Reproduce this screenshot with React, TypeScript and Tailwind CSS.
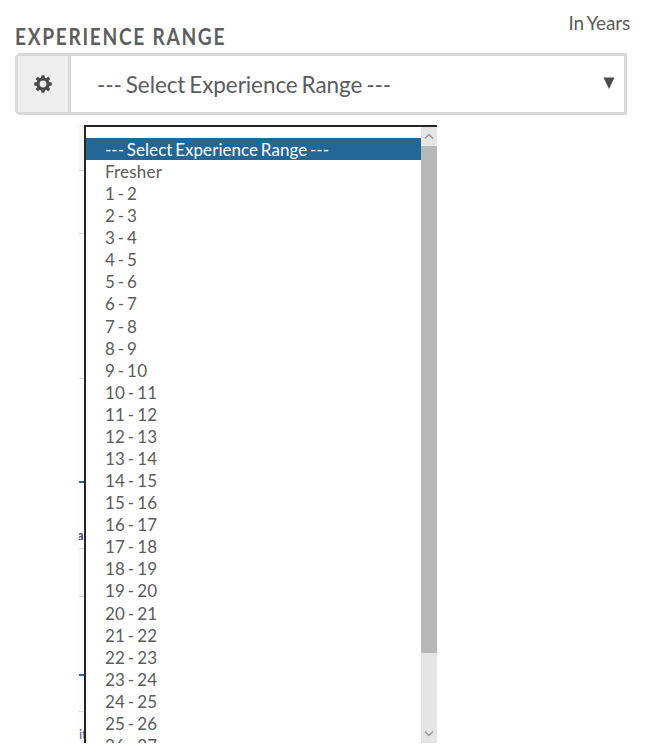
const ranges = Array.from({ length: 26 }, (_, i) => `${i + 1} - ${i + 2}`);

function Gear() {
  return (
    <svg width="18" height="18" viewBox="-9 -9 18 18" className="text-[#4a4a4a]">
      <circle r="5" fill="none" stroke="currentColor" strokeWidth="3.2" />
      {[0, 45, 90, 135, 180, 225, 270, 315].map((a) => (
        <path key={a} d="M-2 -5.6 L-1.4 -8.8 H1.4 L2 -5.6 Z" fill="currentColor" transform={`rotate(${a})`} />
      ))}
    </svg>
  );
}

/* Slice of the page that stays visible beside the open list */
function PageEdge() {
  return (
    <div className="relative h-full w-[5px] shrink-0 overflow-hidden bg-[#fdfdfd] text-[13px] leading-none">
      <div className="absolute top-0 h-[46px] w-full border-b border-[#d5d5d5] bg-[#f4f4f4]" />
      <div className="absolute top-[108px] h-px w-full bg-[#dedede]" />
      <div className="absolute top-[253px] h-px w-full bg-[#dedede]" />
      <div className="absolute top-[356px] h-[2px] w-full bg-[#2460a4]" />
      <div className="absolute -left-[2px] top-[404px] font-bold text-[#4a4c70]">a</div>
      <div className="absolute top-[423px] h-[49px] w-full border-y border-[#d8d8d8] bg-[#f7f7f7]" />
      <div className="absolute top-[549px] h-[2px] w-full bg-[#2467ad]" />
      <div className="absolute top-[586px] h-px w-full bg-[#dedede]" />
      <div className="absolute left-0 top-[603px] text-[#4a5585]">it</div>
    </div>
  );
}

export default function App() {
  return (
    <div className="h-[753px] w-[663px] overflow-hidden bg-white pl-[15px] font-['Lato',sans-serif] text-[#5c5c5c]">
      <div className="flex h-[53px] w-[615px] justify-between">
        <h1 className="mt-[23px] origin-left scale-x-[0.87] whitespace-nowrap text-[22px] font-bold leading-[28px] tracking-[1.95px] text-[#5e5e5e]">
          EXPERIENCE RANGE
        </h1>
        <span className="mt-[11px] whitespace-nowrap text-[19px] leading-[24px] tracking-[-0.15px] [word-spacing:-1.5px]">
          In Years
        </span>
      </div>

      <div className="flex h-[62px] w-[612px] rounded-l-[5px] border-[3px] border-[#dadada]">
        <div className="flex w-[53px] items-center justify-center border-r-[3px] border-[#dadada] bg-[#eee]">
          <Gear />
        </div>
        <div className="flex flex-1 items-center justify-between pl-[26px] pr-[9px]">
          <span className="whitespace-nowrap pt-[2px] text-[22.5px] leading-[30px] tracking-[-0.07px] [word-spacing:-1.8px]">
            --- Select Experience Range ---
          </span>
          <svg width="12" height="12" viewBox="0 0 12 12" className="mb-[3px]">
            <path d="M0.5 0.5H11.5L6 12Z" fill="#4a4a4a" />
          </svg>
        </div>
      </div>

      <div className="ml-[64px] mt-[10px] flex h-[618px] w-[358px] overflow-hidden">
        <PageEdge />
        <div className="flex min-w-0 flex-1 border-l-2 border-t-2 border-[#252525]">
          <ul className="min-w-0 flex-1 overflow-hidden pt-[11px] text-[17px]">
            <li className="h-[22px] whitespace-nowrap bg-[#236796] pl-[19px] pt-px leading-[22px] tracking-[0.05px] text-white [word-spacing:-1.7px]">
              --- Select Experience Range ---
            </li>
            {["Fresher", ...ranges].map((label) => (
              <li
                key={label}
                className="h-[22.08px] whitespace-nowrap pl-[19px] pt-px leading-[22.08px] tracking-[0.2px] [word-spacing:-1.8px]"
              >
                {label}
              </li>
            ))}
          </ul>
          <div className="flex w-[16px] shrink-0 flex-col bg-[#e5e5e5]">
            <div className="flex h-[19px] items-center justify-center">
              <svg width="10" height="7" viewBox="0 0 10 7" fill="none" stroke="#999" strokeWidth="1.5">
                <path d="M1 5.5L5 1.5L9 5.5" />
              </svg>
            </div>
            <div className="h-[507px] bg-[#b8b8b8]" />
            <div className="flex flex-1 items-end justify-center pb-[6px]">
              <svg width="10" height="7" viewBox="0 0 10 7" fill="none" stroke="#999" strokeWidth="1.5">
                <path d="M1 1.5L5 5.5L9 1.5" />
              </svg>
            </div>
          </div>
        </div>
      </div>
    </div>
  );
}
